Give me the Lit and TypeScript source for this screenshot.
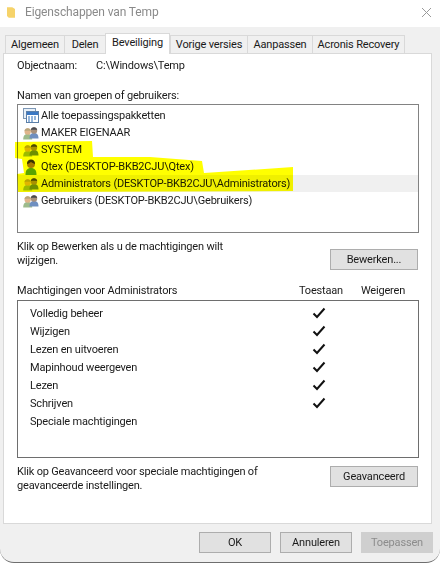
import { LitElement, html, css, svg } from "lit";
import { customElement } from "lit/decorators.js";

const TABS = [
  { t: "Algemeen", w: 59 },
  { t: "Delen", w: 41 },
  { t: "Beveiliging", w: 65, active: true },
  { t: "Vorige versies", w: 77 },
  { t: "Aanpassen", w: 65 },
  { t: "Acronis Recovery", w: 93 },
];
const USERS = [
  { t: "Alle toepassingspakketten", i: "pkg" },
  { t: "MAKER EIGENAAR", i: "group" },
  { t: "SYSTEM", i: "group" },
  { t: "Qtex (DESKTOP-BKB2CJU\\Qtex)", i: "user" },
  { t: "Administrators (DESKTOP-BKB2CJU\\Administrators)", i: "group", sel: true },
  { t: "Gebruikers (DESKTOP-BKB2CJU\\Gebruikers)", i: "group" },
];
const PERMS = [
  ["Volledig beheer", true],
  ["Wijzigen", true],
  ["Lezen en uitvoeren", true],
  ["Mapinhoud weergeven", true],
  ["Lezen", true],
  ["Schrijven", true],
  ["Speciale machtigingen", false],
] as [string, boolean][];

const person = (x: number, y: number, skin: string, hair: string, body: string) => svg`
  <path d="M${x - 4.5} ${y + 11}c0-3.800 1.600-5.500 4.500-5.500s4.500 1.700 4.500 5.500z" fill=${body}/>
  <circle cx=${x} cy=${y + 3} r="3.200" fill=${skin}/>
  <path d="M${x - 3.200} ${y + 2.500}c.4-1.800 1.600-2.700 3.200-2.700s2.800.9 3.200 2.700c-1.800-.4-4.400-.4-6.400 0z" fill=${hair}/>`;

const icon = (k: string) => {
  if (k === "pkg")
    return html`<svg class="ic" viewBox="0 0 16 16">
      <rect x="0.5" y="0.5" width="12" height="10" fill="#e8f0f8" stroke="#7d97b5"/>
      <rect x="3.5" y="3.5" width="12" height="11" fill="#fff" stroke="#5b7fa8"/>
      <rect x="4" y="4" width="11" height="3" fill="#3a78c4"/>
      <path d="M5 9h2M8 9h2M11 9h2M5 11h2M8 11h2M11 11h2M5 13h2M8 13h2" stroke="#2b6cb8"/>
    </svg>`;
  if (k === "user")
    return html`<svg class="ic" viewBox="0 0 16 16">
      <path d="M2.500 16c0-5 1.800-7 5.500-7s5.500 2 5.500 7z" fill="#5aa34a"/>
      <circle cx="8" cy="5" r="4" fill="#a87a3c"/>
      <path d="M4 5c0-3 1.600-4.500 4-4.500S12 2 12 5c-2-.5-3-1.500-4-2-1 .8-2.500 1.800-4 2z" fill="#3a3426"/>
    </svg>`;
  return html`<svg class="ic" viewBox="0 0 16 16">
    ${person(4.700, 3.500, "#e0b58c", "#b9a67c", "#9dbb8c")}
    ${person(11, 2.500, "#a8917c", "#4a4a50", "#6f8fc0")}
  </svg>`;
};

const check = html`<svg class="chk" viewBox="0 0 14 12"><path d="M1.500 6.500 5 10 12.500 1.500" fill="none" stroke="#111" stroke-width="2"/></svg>`;

@customElement("app-root")
export class AppRoot extends LitElement {
  static styles = css`
    :host {
      display: block;
      width: 440px;
      height: 563px;
      position: relative;
      overflow: hidden;
      background: #fff;
      font-family: "Roboto", "Open Sans", sans-serif;
      font-size: 11px;
      letter-spacing: -0.18px;
      color: #1a1a1a;
    }
    .win {
      height: 563px;
      display: flex;
      flex-direction: column;
    }
    .title {
      height: 27px;
      box-sizing: border-box;
      flex: none;
      display: flex;
      align-items: center;
      background: #fff;
      padding: 0 9px 3px 7px;
      gap: 10px;
      font-size: 12px;
      letter-spacing: -0.13px;
      color: #8a8a8a;
    }
    .title .name {
      flex: 1;
    }
    .folder {
      width: 8px;
      height: 11px;
    }
    .close {
      width: 9px;
      height: 9px;
    }
    .body {
      flex: 1;
      background: #f0f0f0;
      border-radius: 0 0 14px 14px;
      border-bottom: 1px solid #6e6e6e;
      padding: 0 8px 0 3px;
      display: flex;
      flex-direction: column;
    }
    .tabs {
      height: 27px;
      flex: none;
      display: flex;
      align-items: flex-end;
      padding-left: 2px;
      position: relative;
      z-index: 1;
      margin-bottom: -1px;
    }
    .tab {
      height: 18px;
      box-sizing: border-box;
      border: 1px solid #d9d9d9;
      border-bottom: 0;
      border-right: 0;
      margin-bottom: 1px;
      display: flex;
      align-items: center;
      justify-content: center;
      background: #f0f0f0;
      white-space: nowrap;
    }
    .tab.last {
      border-right: 1px solid #d9d9d9;
    }
    .tab.on {
      height: 21px;
      margin-bottom: 0;
      background: #fff;
      border-right: 1px solid #d9d9d9;
      padding-bottom: 3px;
    }
    .panel {
      flex: none;
      height: 471px;
      box-sizing: border-box;
      background: #fff;
      border: 1px solid #d9d9d9;
      padding: 0 12px 0 13px;
      display: flex;
      flex-direction: column;
    }
    .obj {
      display: flex;
      height: 21px;
      align-items: center;
      margin-top: 1px;
    }
    .obj span:first-child {
      width: 79px;
    }
    .lbl {
      margin-top: 9px;
      height: 20px;
      display: flex;
      align-items: center;
    }
    .list {
      height: 129px;
      box-sizing: border-box;
      border: 1px solid #828282;
      padding: 2px 0 0 0;
      margin-top: -1px;
    }
    .row {
      height: 17px;
      display: flex;
      align-items: center;
      gap: 2px;
      padding-left: 5px;
      white-space: nowrap;
    }
    .row.sel {
      background: #f0f0f0;
    }
    .ic {
      width: 16px;
      height: 16px;
      flex: none;
    }
    .hint {
      display: flex;
      justify-content: space-between;
      align-items: flex-start;
      line-height: 13.500px;
      padding-right: 1px;
      white-space: nowrap;
    }
    .hint p {
      margin: 0;
    }
    .h1 {
      height: 41px;
      margin-top: 7px;
    }
    .btn {
      box-sizing: border-box;
      height: 21px;
      width: 88px;
      flex: none;
      background: #e1e1e1;
      border: 1px solid #adadad;
      display: flex;
      align-items: center;
      justify-content: center;
    }
    .h1 .btn {
      margin-top: 9px;
    }
    .h2 .btn {
      margin-top: 1px;
    }
    .phead {
      display: flex;
      height: 19px;
      align-items: center;
    }
    .phead .n {
      flex: 1;
    }
    .phead .a {
      width: 60px;
      text-align: center;
    }
    .phead .d {
      width: 52px;
      text-align: center;
      margin: 0 10px 0 6px;
    }
    .plist {
      height: 158px;
      box-sizing: border-box;
      border: 1px solid #6e6e6e;
      padding: 3px 0 0 0;
    }
    .prow {
      height: 18px;
      display: flex;
      align-items: center;
      padding-left: 12px;
    }
    .prow .n {
      width: 282px;
    }
    .chk {
      width: 14px;
      height: 12px;
    }
    .h2 {
      margin-top: 7px;
    }
    .foot {
      flex: 1;
      display: flex;
      justify-content: flex-end;
      align-items: flex-start;
      gap: 9px;
      padding-top: 8px;
      margin-right: -1px;
    }
    .foot .btn {
      width: 72px;
    }
    .foot .btn.off {
      background: #cfcfcf;
      border-color: #cfcfcf;
      color: #8c8c8c;
    }
    .marks {
      position: absolute;
      left: 0;
      top: 0;
      width: 440px;
      height: 563px;
      mix-blend-mode: multiply;
      pointer-events: none;
    }
  `;

  render() {
    return html`<div class="win">
        <div class="title">
          <svg class="folder" viewBox="0 0 9 12"><path d="M0 0h6l3 2v10H2L0 10z" fill="#f6d36a"/></svg>
          <span class="name">Eigenschappen van Temp</span>
          <svg class="close" viewBox="0 0 9 9"><path d="M0 0l9 9M9 0L0 9" stroke="#9a9a9a" fill="none"/></svg>
        </div>
        <div class="body">
          <div class="tabs">
            ${TABS.map(
              (t, i) => html`<div
                class="tab ${t.active ? "on" : ""} ${i === TABS.length - 1 ? "last" : ""}"
                style="width:${t.w}px"
              >${t.t}</div>`
            )}
          </div>
          <div class="panel">
            <div class="obj"><span>Objectnaam:</span><span>C:\\Windows\\Temp</span></div>
            <div class="lbl">Namen van groepen of gebruikers:</div>
            <div class="list">
              ${USERS.map(
                (u) => html`<div class="row ${u.sel ? "sel" : ""}">${icon(u.i)}<span>${u.t}</span></div>`
              )}
            </div>
            <div class="hint h1">
              <p>Klik op Bewerken als u de machtigingen wilt<br />wijzigen.</p>
              <div class="btn">Bewerken...</div>
            </div>
            <div class="phead">
              <span class="n">Machtigingen voor Administrators</span>
              <span class="a">Toestaan</span><span class="d">Weigeren</span>
            </div>
            <div class="plist">
              ${PERMS.map(
                ([n, c]) => html`<div class="prow"><span class="n">${n}</span>${c ? check : ""}</div>`
              )}
            </div>
            <div class="hint h2">
              <p>Klik op Geavanceerd voor speciale machtigingen of<br />geavanceerde instellingen.</p>
              <div class="btn">Geavanceerd</div>
            </div>
          </div>
          <div class="foot">
            <div class="btn">OK</div>
            <div class="btn">Annuleren</div>
            <div class="btn off">Toepassen</div>
          </div>
        </div>
      </div>
      <svg class="marks" viewBox="0 0 440 563">
        <path d="M15 142L92 141L93 157L150 157L202 161L204 173L293 167L293 191L18 192L17 174L24 173L22 159L15 158z" fill="#ffff00"/>
      </svg>`;
  }
}
